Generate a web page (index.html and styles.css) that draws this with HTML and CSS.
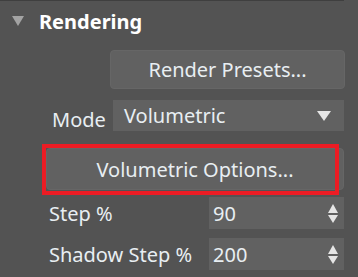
FILE: index.html
```html
<!DOCTYPE html>
<html lang="en">
<head>
  <meta charset="UTF-8" />
  <title>Rendering</title>
  <link rel="stylesheet" href="styles.css">
</head>
<body>
  <div class="panel">
    <div class="header">
      <span class="caret"></span>
      <span class="title">Rendering</span>
    </div>

    <div class="presets-row">
      <button class="btn presets">Render Presets...</button>
    </div>

    <div class="mode-row">
      <span class="label">Mode</span>
      <div class="dropdown">
        <span>Volumetric</span>
        <span class="arrow"></span>
      </div>
    </div>

    <div class="options-row">
      <button class="btn options">Volumetric Options...</button>
      <div class="highlight"></div>
    </div>

    <div class="field-row">
      <span class="label">Step %</span>
      <div class="spinner">
        <span>90</span>
        <span class="spin-arrows"><i class="up"></i><i class="down"></i></span>
      </div>
    </div>

    <div class="field-row">
      <span class="label">Shadow Step %</span>
      <div class="spinner">
        <span>200</span>
        <span class="spin-arrows"><i class="up"></i><i class="down"></i></span>
      </div>
    </div>
  </div>
</body>
</html>
```

FILE: styles.css
```css
body {
  margin: 0;
  background-color: #535353;
  font-family: "Noto Sans", "Open Sans", sans-serif;
  color: #e8eef2;
  width: 358px;
  height: 277px;
  overflow: hidden;
}

.panel {
  border-top: 1px solid #3f3f3f;
  width: 344px;
  height: 276px;
}

.header {
  display: flex;
  align-items: center;
  height: 40px;
}

.caret {
  flex: none;
  width: 0;
  height: 0;
  margin-left: 12px;
  border-left: 6.5px solid transparent;
  border-right: 6.5px solid transparent;
  border-top: 10px solid #a3a3a3;
}

.title {
  margin-left: 15px;
  font-size: 20px;
  font-weight: bold;
  color: #fff;
}

.btn {
  font-family: inherit;
  color: #e8eef2;
  background-color: #616161;
  border: 1px solid #666;
  border-radius: 4px;
  font-size: 20px;
  padding: 0;
}

.presets-row {
  padding: 9px 0 0 110px;
}

.presets {
  width: 235px;
  height: 39px;
}

.label {
  flex: none;
  box-sizing: border-box;
  font-size: 20px;
}

.mode-row {
  display: flex;
  align-items: center;
  margin-top: 11px;
  height: 31px;
}

.mode-row .label {
  width: 113px;
  padding-left: 52px;
  margin-top: 7px;
}

.dropdown {
  display: flex;
  align-items: center;
  justify-content: space-between;
  width: 232px;
  height: 31px;
  box-sizing: border-box;
  padding: 0 13px 0 11px;
  background-color: #616161;
  font-size: 20px;
}

.arrow {
  width: 0;
  height: 0;
  border-left: 7px solid transparent;
  border-right: 7px solid transparent;
  border-top: 10px solid #e6e6e6;
}

.options-row {
  position: relative;
  margin-top: 17px;
  padding-left: 46px;
  height: 42px;
}

.options {
  width: 298px;
  height: 42px;
}

.highlight {
  position: absolute;
  left: 42px;
  top: -4px;
  width: 297px;
  height: 51px;
  box-sizing: border-box;
  border: 4px solid #ec1c24;
}

.field-row {
  display: flex;
  align-items: center;
  margin-top: 7px;
  height: 32px;
}

.field-row + .field-row {
  margin-top: 9px;
}

.field-row .label {
  width: 209px;
  padding-left: 49px;
}

.spinner {
  display: flex;
  align-items: center;
  justify-content: space-between;
  width: 136px;
  height: 32px;
  box-sizing: border-box;
  padding: 0 6px 0 4px;
  background-color: #616161;
  font-size: 20px;
}

.spin-arrows {
  display: flex;
  flex-direction: column;
  gap: 2px;
}

.spin-arrows i {
  width: 0;
  height: 0;
  border-left: 5.5px solid transparent;
  border-right: 5.5px solid transparent;
}

.spin-arrows .up {
  border-bottom: 9px solid #e6e6e6;
}

.spin-arrows .down {
  border-top: 8px solid #e6e6e6;
}
```
